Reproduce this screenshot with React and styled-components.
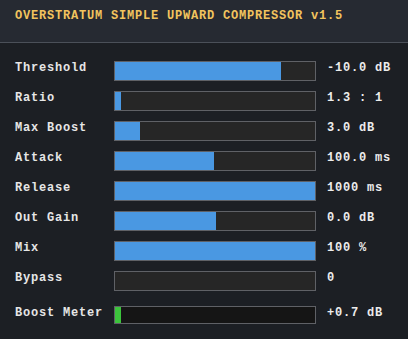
import styled, { createGlobalStyle } from "styled-components";

const GlobalStyle = createGlobalStyle`
  html, body {
    margin: 0;
    padding: 0;
    background: #1c1f24;
  }
`;

const params = [
  { label: "Threshold", value: "-10.0 dB", fill: 83 },
  { label: "Ratio", value: "1.3 : 1", fill: 3 },
  { label: "Max Boost", value: "3.0 dB", fill: 12.5 },
  { label: "Attack", value: "100.0 ms", fill: 49.5 },
  { label: "Release", value: "1000 ms", fill: 100 },
  { label: "Out Gain", value: "0.0 dB", fill: 50.5 },
  { label: "Mix", value: "100 %", fill: 100 },
  { label: "Bypass", value: "0", fill: 0 },
];

const App = () => {
  return (
    <>
      <GlobalStyle />
      <Panel>
        <Header>
          <Title>OVERSTRATUM SIMPLE UPWARD COMPRESSOR v1.5</Title>
        </Header>
        <Body>
          {params.map((p) => (
            <Row key={p.label}>
              <Label>{p.label}</Label>
              <Slider>
                <Fill style={{ width: `${p.fill}%` }} />
              </Slider>
              <Value>{p.value}</Value>
            </Row>
          ))}
          <Row meter>
            <Label>Boost Meter</Label>
            <Slider meter>
              <Fill meter style={{ width: "3%" }} />
            </Slider>
            <Value>+0.7 dB</Value>
          </Row>
        </Body>
      </Panel>
    </>
  );
};

export default App;

const Panel = styled.div`
  width: 408px;
  height: 339px;
  background: #1c1f24;
  font-family: "Liberation Mono", "DejaVu Sans Mono", monospace;
  font-weight: bold;
  font-size: 12px;
  letter-spacing: 0.8px;
  line-height: 14px;
  overflow: hidden;
`;

const Header = styled.div`
  box-sizing: border-box;
  height: 43px;
  padding: 9px 15px 0;
  background: #262a32;
  border-bottom: 1px solid #4b5059;
`;

const Title = styled.div`
  color: #f2c45e;
  white-space: nowrap;
`;

const Body = styled.div`
  display: flex;
  flex-direction: column;
  gap: 10px;
  padding: 18px 0 0 15px;
`;

const Row = styled.div`
  display: flex;
  align-items: flex-start;
  margin-top: ${(props) => (props.meter ? "5px" : "0")};
`;

const Label = styled.div`
  width: 99px;
  color: #e6e6e6;
  white-space: nowrap;
`;

const Slider = styled.div`
  box-sizing: border-box;
  width: 202px;
  height: ${(props) => (props.meter ? "18px" : "20px")};
  border: 1px solid #5f6166;
  background: ${(props) => (props.meter ? "#151515" : "#262626")};
  display: flex;
`;

const Fill = styled.div`
  height: 100%;
  background: ${(props) => (props.meter ? "#3cc43c" : "#4a98e2")};
`;

const Value = styled.div`
  margin-left: 11px;
  color: #ececec;
  white-space: nowrap;
`;
